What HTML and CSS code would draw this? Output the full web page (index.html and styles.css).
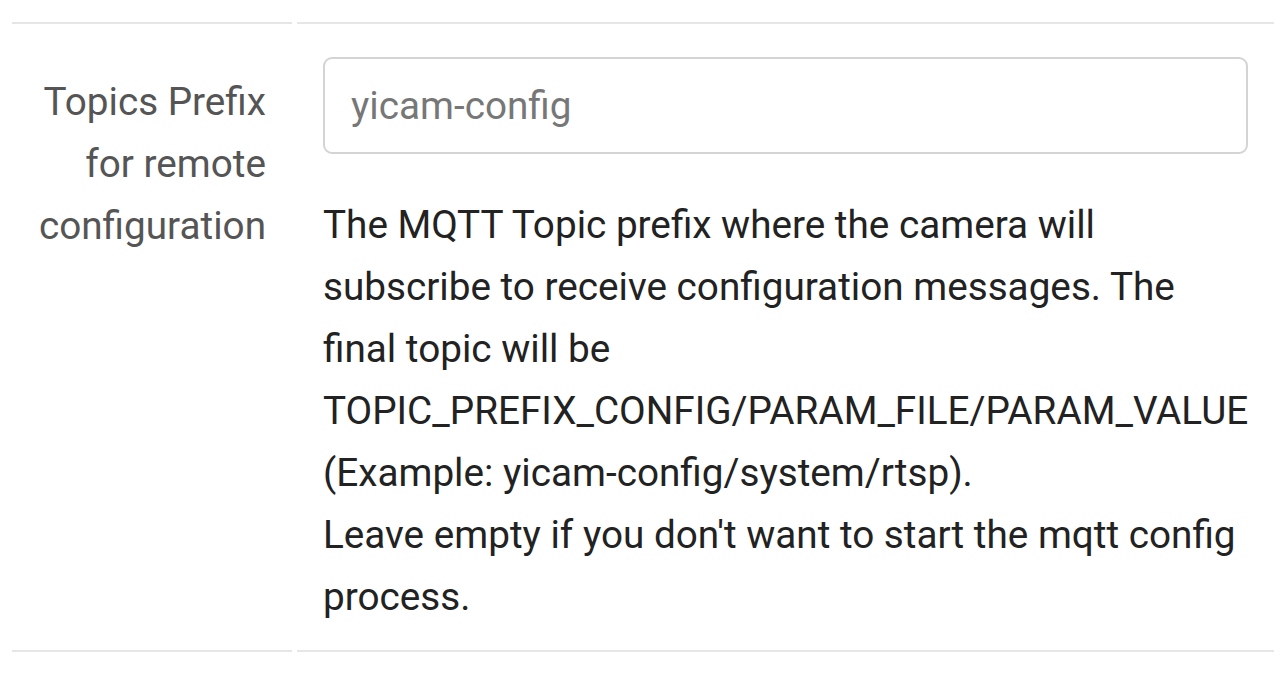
FILE: index.html
```html
<!DOCTYPE html>
<html>
<head>
<meta charset="utf-8">
<link rel="stylesheet" href="styles.css">
</head>
<body>
<div class="row">
  <div class="cell label-cell">
    <label class="label" for="prefix">Topics Prefix for remote configuration</label>
  </div>
  <div class="cell field-cell">
    <input id="prefix" class="input" type="text" placeholder="yicam-config">
    <p class="help">The MQTT Topic prefix where the camera will subscribe to receive configuration messages. The final topic will be TOPIC_PREFIX_CONFIG/PARAM_FILE/PARAM_VALUE (Example: yicam-config/system/rtsp).<br>Leave empty if you don't want to start the mqtt config process.</p>
  </div>
</div>
</body>
</html>
```

FILE: styles.css
```css
html, body {
  margin: 0;
  padding: 0;
  background: #fff;
}
body {
  font-family: Roboto, "Liberation Sans", sans-serif;
  font-size: 38.7px;
  line-height: 62px;
  color: #222;
  padding: 22px 7px 0 12px;
}
.row {
  display: grid;
  grid-template-columns: 280px 977px;
  column-gap: 5px;
}
.cell {
  border-top: 2px solid #e6e6e6;
  border-bottom: 2px solid #e6e6e6;
}
.label-cell {
  padding: 47px 26px 0 0;
  text-align: right;
}
.label {
  color: #555;
}
.field-cell {
  padding: 33px 26px 22px 26px;
}
.input {
  display: block;
  box-sizing: border-box;
  width: 100%;
  height: 97px;
  margin: 0;
  padding: 0 26px;
  border: 2px solid #d4d4d4;
  border-radius: 9px;
  font-family: inherit;
  font-size: 38.7px;
  color: #222;
  background: #fff;
  outline: none;
}
.input::placeholder {
  color: #777;
}
.help {
  margin: 40px -8px 0 0;
}
```
